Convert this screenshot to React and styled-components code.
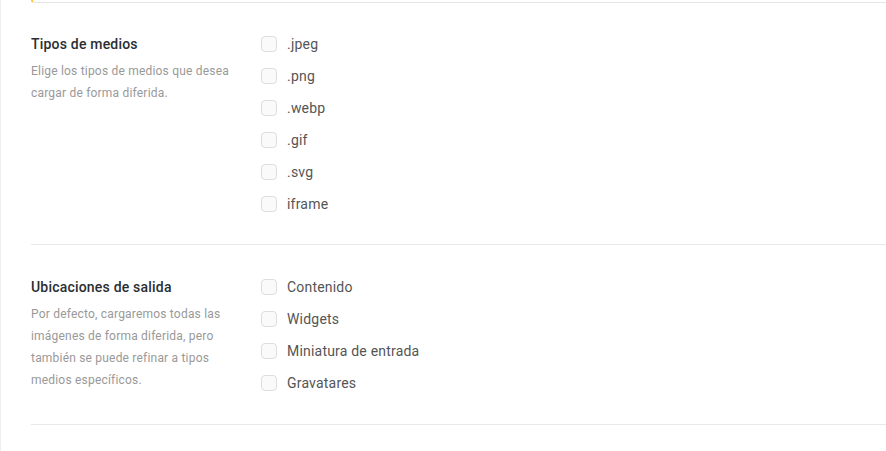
import React from "react";
import styled, { createGlobalStyle } from "styled-components";

const GlobalStyle = createGlobalStyle`
  body {
    margin: 0;
    background: #fff;
    font-family: Roboto, "Liberation Sans", sans-serif;
  }
`;

const Page = styled.div`
  height: 451px;
  border-left: 1px solid #eeeeee;
  padding-left: 30px;
  box-sizing: border-box;
  overflow: hidden;
`;

const TopCard = styled.div`
  height: 2px;
  border-left: 2px solid #ffc733;
  border-bottom: 1px solid #e5e5e5;
  border-bottom-left-radius: 4px;
`;

const Section = styled.div`
  display: grid;
  grid-template-columns: 230px 1fr;
  padding: ${(p) => (p.$first ? "25px 0 24px" : "26px 0 25px")};
  border-bottom: 1px solid #e8e8e8;
  letter-spacing: 0.2px;
`;

const Info = styled.div`
  display: flex;
  flex-direction: column;
`;

const Title = styled.div`
  font-size: 14px;
  font-weight: 500;
  line-height: 32px;
  color: #2a2e33;
`;

const Desc = styled.p`
  margin: 0;
  font-size: 12px;
  line-height: 22px;
  color: #999;
  max-width: 210px;
`;

const Options = styled.div`
  display: flex;
  flex-direction: column;
`;

const Option = styled.label`
  display: flex;
  align-items: center;
  height: 32px;
  font-size: 14px;
  color: #555;
  cursor: pointer;
`;

const Box = styled.span`
  width: 16px;
  height: 16px;
  box-sizing: border-box;
  border: 1px solid #dddddd;
  border-radius: 4px;
  background: #fafafa;
  margin-right: 10px;
`;

const sections = [
  {
    title: "Tipos de medios",
    desc: "Elige los tipos de medios que desea cargar de forma diferida.",
    options: [".jpeg", ".png", ".webp", ".gif", ".svg", "iframe"],
  },
  {
    title: "Ubicaciones de salida",
    desc: "Por defecto, cargaremos todas las imágenes de forma diferida, pero también se puede refinar a tipos medios específicos.",
    options: ["Contenido", "Widgets", "Miniatura de entrada", "Gravatares"],
  },
];

const App = () => (
  <>
    <GlobalStyle />
    <Page>
      <TopCard />
      {sections.map((s, i) => (
        <Section key={s.title} $first={i === 0}>
          <Info>
            <Title>{s.title}</Title>
            <Desc>{s.desc}</Desc>
          </Info>
          <Options>
            {s.options.map((o) => (
              <Option key={o}>
                <Box />
                {o}
              </Option>
            ))}
          </Options>
        </Section>
      ))}
    </Page>
  </>
);

export default App;
